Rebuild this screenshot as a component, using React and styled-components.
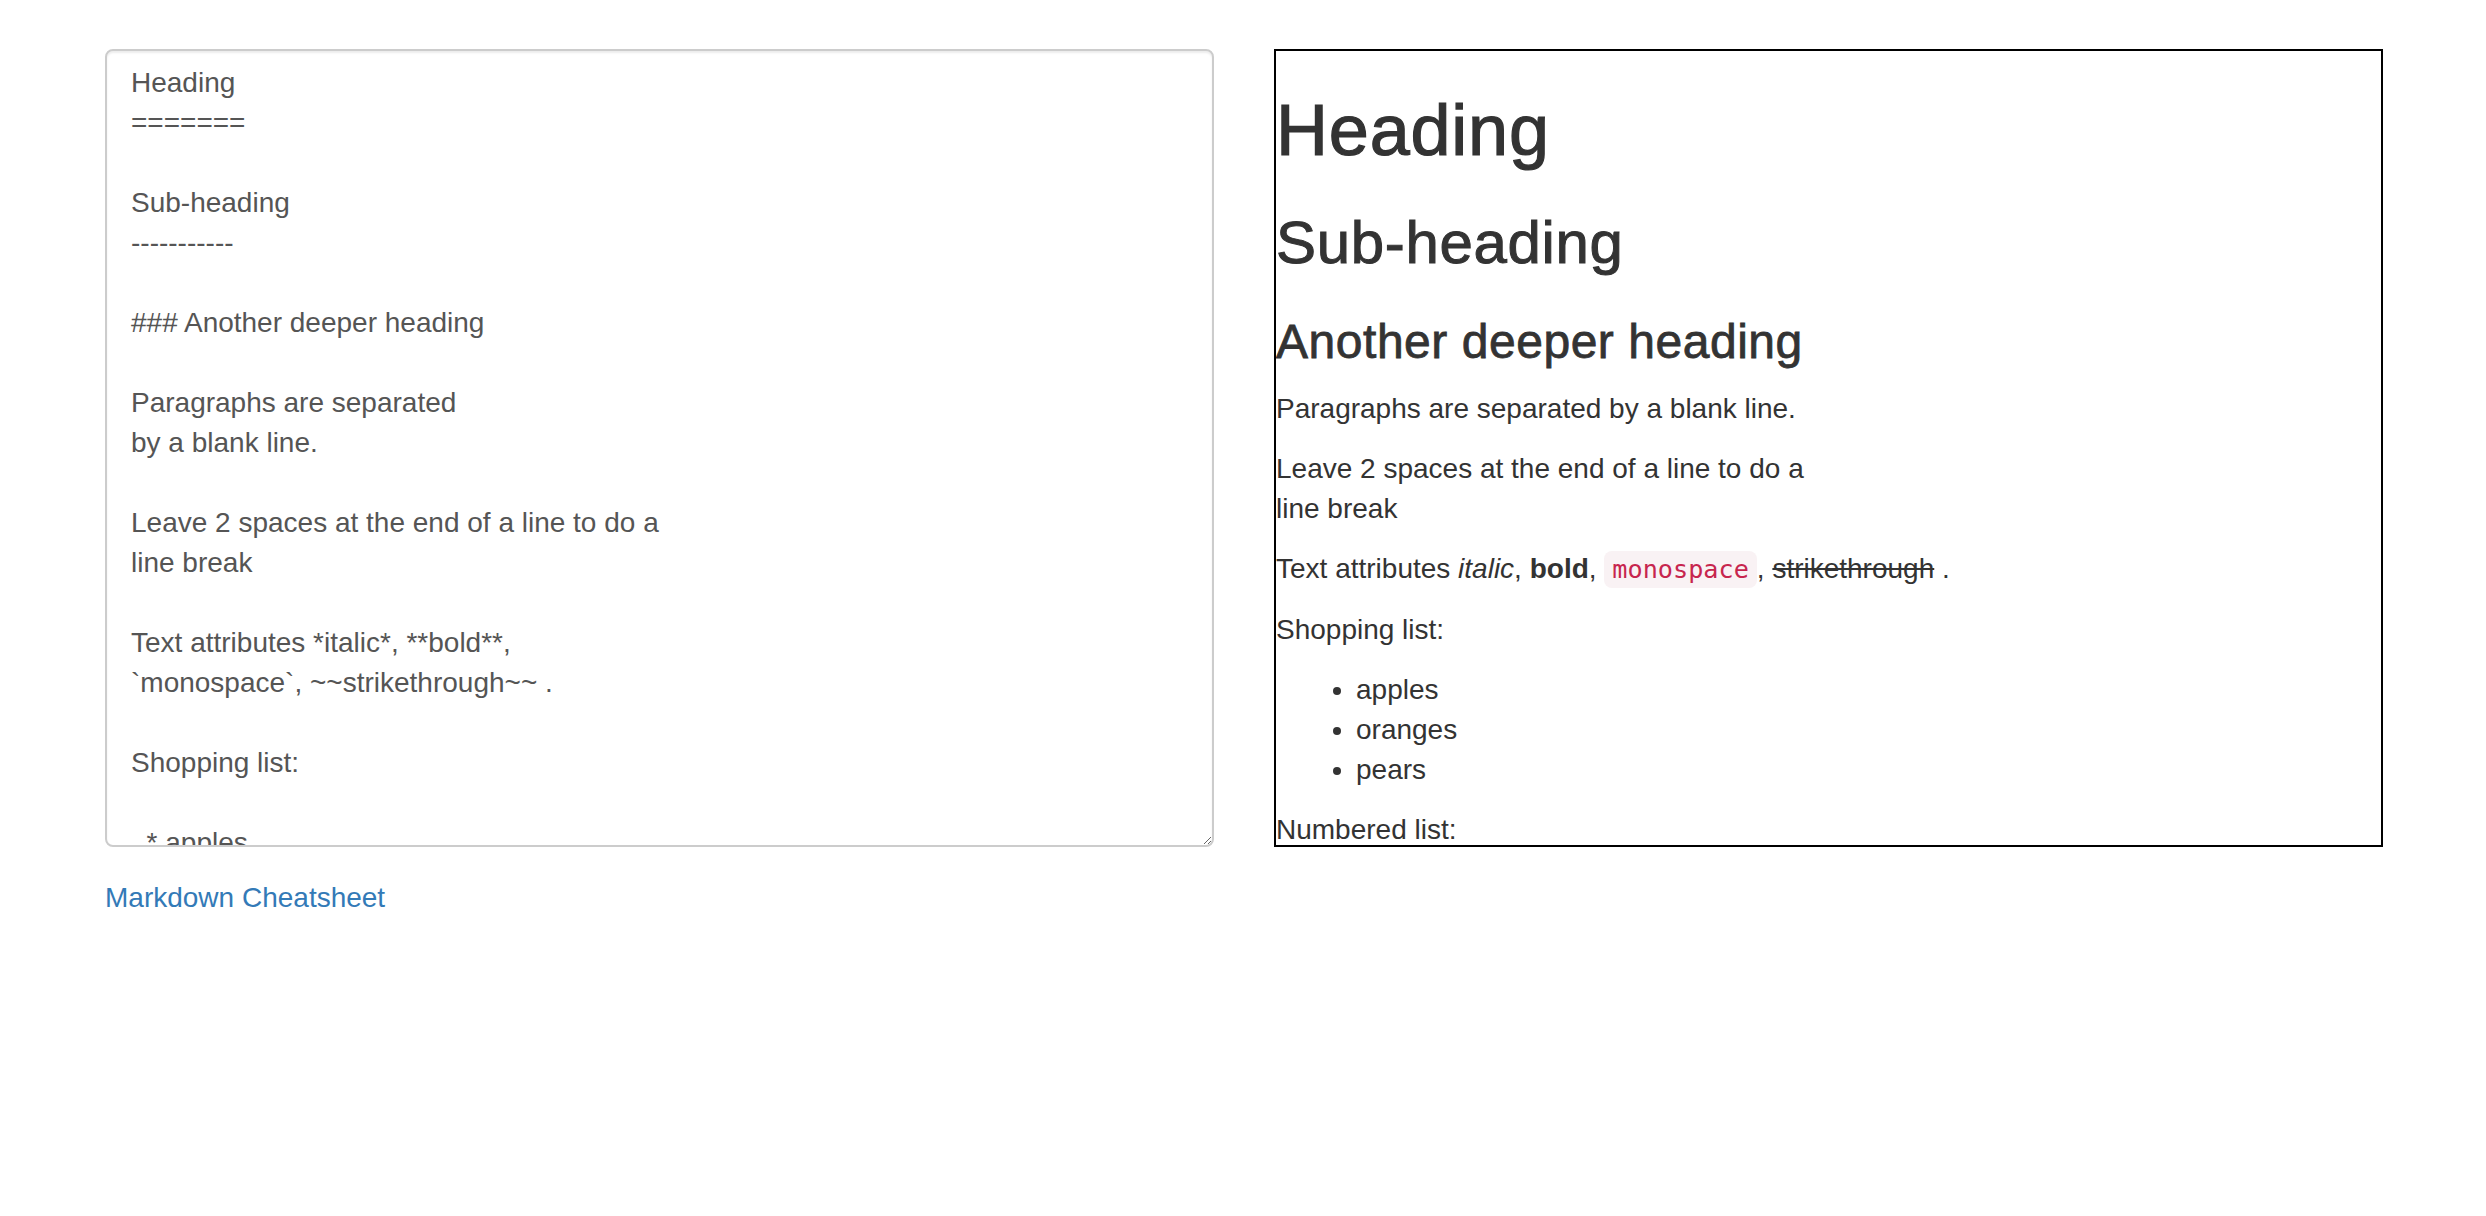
import React from "react";
import styled, { createGlobalStyle } from "styled-components";

const GlobalStyle = createGlobalStyle`
  html, body {
    margin: 0;
    padding: 0;
    background: #fff;
  }
  body {
    font-family: "Liberation Sans", Helvetica, Arial, sans-serif;
    font-size: 28px;
    line-height: 40px;
    color: #333;
  }
  * { box-sizing: border-box; }
`;

const Container = styled.div`
  width: 2340px;
  margin: 0 auto;
  padding: 49px 0 0 2px;
`;

const Row = styled.div`
  display: grid;
  grid-template-columns: 1fr 1fr;
`;

const Column = styled.div`
  padding: 0 30px;
  display: flex;
  flex-direction: column;
  align-items: flex-start;
`;

const Editor = styled.textarea`
  display: block;
  width: 100%;
  height: 798px;
  margin: 0;
  padding: 12px 24px;
  border: 2px solid #ccc;
  border-radius: 8px;
  box-shadow: inset 0 2px 2px rgba(0, 0, 0, 0.075);
  font-family: "Liberation Sans", Helvetica, Arial, sans-serif;
  font-size: 28px;
  line-height: 40px;
  color: #555;
  background: #fff;
  resize: vertical;
  overflow: hidden;
  outline: none;
  scrollbar-width: none;
  &::-webkit-scrollbar { display: none; }
`;

const CheatLink = styled.a`
  margin-top: 31px;
  color: #337ab7;
  text-decoration: none;
  font-size: 28px;
  line-height: 40px;
`;

const Preview = styled.div`
  width: 100%;
  height: 798px;
  border: 2px solid #000;
  overflow: hidden;
`;

const Heading = styled.h1`
  font-family: inherit;
  font-weight: 400;
  line-height: 1.1;
  color: inherit;
  font-size: ${(p) => p.$size}px;
  letter-spacing: ${(p) => p.$size / 90}px;
  -webkit-text-stroke: ${(p) => p.$size / 60}px #333;
  margin: 40px 0 20px;
`;

const Para = styled.p`
  margin: 0 0 20px;
`;

const Code = styled.code`
  font-family: "DejaVu Sans Mono", Menlo, Monaco, Consolas, monospace;
  font-size: 90%;
  padding: 4px 8px;
  color: #c7254e;
  background-color: #f9f2f4;
  border-radius: 8px;
`;

const List = styled.ul`
  margin: 0 0 20px;
  padding-left: 80px;
`;

const OrderedList = styled.ol`
  margin: 0 0 20px;
  padding-left: 80px;
`;

const source = `Heading
=======

Sub-heading
-----------

### Another deeper heading

Paragraphs are separated
by a blank line.

Leave 2 spaces at the end of a line to do a  
line break

Text attributes *italic*, **bold**,
\`monospace\`, ~~strikethrough~~ .

Shopping list:

  * apples
  * oranges
  * pears

Numbered list:

  1. apples
  2. oranges
  3. pears

The rain---not the reign---in
Spain.

 *[Herman Fassbinder](http://www.fassbinder.com)*`;

export default function App() {
  return (
    <>
      <GlobalStyle />
      <Container>
        <Row>
          <Column>
            <Editor defaultValue={source} spellCheck={false} />
            <CheatLink href="#">Markdown Cheatsheet</CheatLink>
          </Column>
          <Column>
            <Preview>
              <Heading as="h1" $size={72}>Heading</Heading>
              <Heading as="h2" $size={60}>Sub-heading</Heading>
              <Heading as="h3" $size={48}>Another deeper heading</Heading>
              <Para>Paragraphs are separated by a blank line.</Para>
              <Para>
                Leave 2 spaces at the end of a line to do a
                <br />
                line break
              </Para>
              <Para>
                Text attributes <em>italic</em>, <strong>bold</strong>,{" "}
                <Code>monospace</Code>, <s>strikethrough</s> .
              </Para>
              <Para>Shopping list:</Para>
              <List>
                <li>apples</li>
                <li>oranges</li>
                <li>pears</li>
              </List>
              <Para>Numbered list:</Para>
              <OrderedList>
                <li>apples</li>
                <li>oranges</li>
                <li>pears</li>
              </OrderedList>
              <Para>The rain—not the reign—in Spain.</Para>
            </Preview>
          </Column>
        </Row>
      </Container>
    </>
  );
}
